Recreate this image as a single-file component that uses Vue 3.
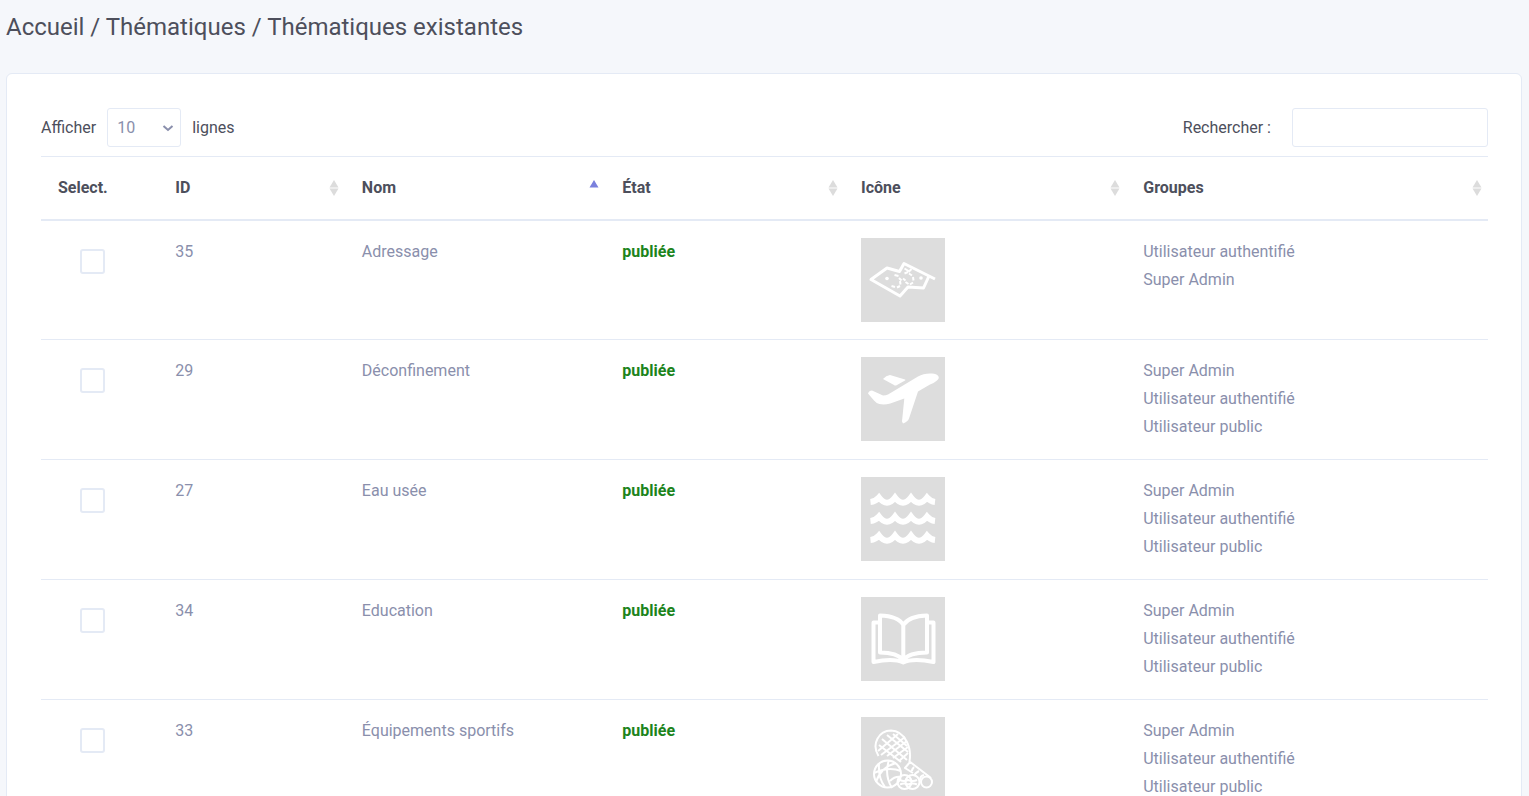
<script setup>
import { ref } from 'vue'

const length = ref('10')
const search = ref('')
const columns = [
  { label: 'Select.', sort: null },
  { label: 'ID', sort: 'both' },
  { label: 'Nom', sort: 'asc' },
  { label: 'État', sort: 'both' },
  { label: 'Icône', sort: 'both' },
  { label: 'Groupes', sort: 'both' },
]
const all = ['Super Admin', 'Utilisateur authentifié', 'Utilisateur public']
const rows = ref([
  { id: 35, name: 'Adressage', icon: 'map', groups: ['Utilisateur authentifié', 'Super Admin'], checked: false },
  { id: 29, name: 'Déconfinement', icon: 'plane', groups: all, checked: false },
  { id: 27, name: 'Eau usée', icon: 'waves', groups: all, checked: false },
  { id: 34, name: 'Education', icon: 'book', groups: all, checked: false },
  { id: 33, name: 'Équipements sportifs', icon: 'sport', groups: all, checked: false },
])
</script>

<template>
  <div class="page">
    <h1 class="title">Accueil / Thématiques / Thématiques existantes</h1>
    <main class="card">
      <div class="toolbar">
        <div class="length">
          <label for="length">Afficher</label>
          <span class="select-wrap">
            <select id="length" v-model="length">
              <option>10</option>
              <option>25</option>
              <option>50</option>
            </select>
            <svg class="chevron" viewBox="0 0 12 8" aria-hidden="true"><path d="M1.500 2 6 6l4.500-4" /></svg>
          </span>
          <span>lignes</span>
        </div>
        <div class="search">
          <label for="search">Rechercher :</label>
          <input id="search" v-model="search" type="search" />
        </div>
      </div>

      <table>
        <colgroup>
          <col class="c-select" /><col class="c-id" /><col class="c-name" />
          <col class="c-state" /><col class="c-icon" /><col class="c-groups" />
        </colgroup>
        <thead>
          <tr>
            <th v-for="c in columns" :key="c.label" scope="col">
              <div class="head">
                <span>{{ c.label }}</span>
                <button v-if="c.sort" type="button" class="sort" :class="c.sort" :aria-label="'Trier par ' + c.label">
                  <svg viewBox="0 0 10 16" aria-hidden="true">
                    <path class="up" d="M5 0 9.500 7.500h-9z" />
                    <path class="down" d="M.5 8.500h9L5 16z" />
                  </svg>
                </button>
              </div>
            </th>
          </tr>
        </thead>
        <tbody>
          <tr v-for="r in rows" :key="r.id">
            <td><input v-model="r.checked" class="check" type="checkbox" :aria-label="'Sélectionner ' + r.name" /></td>
            <td>{{ r.id }}</td>
            <td>{{ r.name }}</td>
            <td><strong>publiée</strong></td>
            <td>
              <svg class="icon" viewBox="0 0 84 84" role="img" :aria-label="r.name">
                <g v-if="r.icon === 'map'" class="line">
                  <path d="M74 41 43 25.500 38.500 33.500 26 30 10 41.500 39 58l8-9 15.500 1L68 38" />
                  <path class="thin" d="m33.500 37 4 1M38 40l2.500 2.500M30.500 48l3.500 1M36 49.500l3-1.500M39.500 46.500 39 43M42 40.500l2.500 2M44.500 44l3 2M49 46.500l3-2M52.500 42.500 52 39M51 37.500l-3-2M43.500 30.500l4 2.500M50.500 31l-3 3M43.500 35.500l3.500-1.500" />
                  <circle class="solid" cx="26" cy="40.500" r="1.800" /><circle class="solid" cx="60" cy="40" r="1.800" />
                </g>
                <path v-else-if="r.icon === 'plane'" class="solid" d="M7 36.500q1-3 4-3l11 5q3 0 5-1l30-18q6-3.500 14-3c6 0 9 4 5 7q-2 2-7 4l-12 7-9 27q-1 3-6 5l-1-2q0-1 .3-3l2-20-14 5q-6 1.500-11 .5Q15 46 13 43.500zM22 22q3-3.500 7-4l15 4.500q1 .5 0 1l-8 4.500q-2 1-3 0z" />
                <g v-else-if="r.icon === 'waves'" class="line waves">
                  <path v-for="y in [0, 19, 38]" :key="y" :transform="`translate(0 ${y})`" d="M9.500 25q5-.5 8.500-4.500 8 10.500 16 0 8 10.500 16 0 8 10.500 16 0 3.500 4 8 4.500" />
                </g>
                <g v-else-if="r.icon === 'book'" class="line book">
                  <path d="M42.300 27v39M42.300 28Q37 19 19 18.500V55.500q17 0 23.300 7.500Q48 55.500 66 55.500V18.500Q48 19 42.300 28M19 25.500h-6.500v39.500q20-4 29.800.5 9.800-4.500 30.200-.5V25.500H66" />
                </g>
                <g v-else class="line sport">
                  <path d="M17.500 39C10 27 18 13.500 30 13.500c14 .5 21 17 18.500 31L70 61M49 45l-5 6 8 5M53 50q-2 2-2 4M58 54q-4 2-5 5M63 58q-4 1-4 5" />
                  <path class="net" d="m18 28 22 17m-19-23 25 21M26 18l21 17M32 17l14 12M17 34l20-17M20 38l24-18M26 39l20-15M32 41l15-11M38 44l9-8" />
                  <circle cx="26.500" cy="57" r="13.500" />
                  <path d="M13 56q15-7 27-2M18 46q-1 15 6 24M15 65q5-15 20-19M31 71q-8-13-3-28M29 64q5-5 11-4" />
                  <circle cx="43.500" cy="65" r="7" /><circle cx="51.500" cy="65" r="7" /><circle cx="65.500" cy="65" r="5.500" />
                  <path d="M39 63q4 2 8 0 5 2 9 0M39 67.500q4-2 8 0 5-2 9 0" />
                </g>
              </svg>
            </td>
            <td>
              <div v-for="g in r.groups" :key="g">{{ g }}</div>
            </td>
          </tr>
        </tbody>
      </table>
    </main>
  </div>
</template>

<style>
body {
  margin: 0;
  background: #f5f7fb;
}
</style>

<style scoped>
.page {
  box-sizing: border-box;
  height: 100vh;
  overflow: hidden;
  padding: 10px 7px 0 6px;
  font-family: Roboto, sans-serif;
  font-size: 16px;
  line-height: 28px;
  color: #4d4f5c;
}
.title {
  margin: 0 0 29px;
  font-size: 24px;
  font-weight: 400;
  line-height: 34px;
}
.card {
  padding: 34px 33px 34px 34px;
  background: #fff;
  border: 1px solid #e4eaf5;
  border-radius: 6px;
}
.toolbar {
  display: flex;
  justify-content: space-between;
  align-items: center;
  margin-bottom: 9px;
}
.length {
  display: flex;
  align-items: center;
  gap: 11px;
}
.search {
  display: flex;
  align-items: center;
  gap: 21px;
}
.select-wrap {
  display: grid;
  align-items: center;
}
select,
.search input {
  box-sizing: border-box;
  height: 39px;
  border: 1px solid #e4eaf5;
  border-radius: 3px;
  background: #fff;
  color: #8a8fac;
  font: inherit;
}
select {
  grid-area: 1 / 1;
  width: 74px;
  padding: 0 9px;
  appearance: none;
}
.chevron {
  grid-area: 1 / 1;
  justify-self: end;
  width: 12px;
  height: 8px;
  margin-right: 7px;
  pointer-events: none;
  fill: none;
  stroke: #8a8fac;
  stroke-width: 2;
}
.search input {
  width: 196px;
  padding: 0 10px;
}
table {
  width: 100%;
  table-layout: fixed;
  border-collapse: separate;
  border-spacing: 0;
  border-top: 1px solid #e4eaf5;
}
.c-select { width: 8.1%; }
.c-id { width: 12.9%; }
.c-name { width: 18%; }
.c-state { width: 16.5%; }
.c-icon { width: 19.5%; }
.c-groups { width: 25%; }
th {
  padding: 17px 6px 17px 17px;
  border-bottom: 2px solid #e4eaf5;
  text-align: left;
  font-weight: 700;
}
.head {
  display: flex;
  align-items: center;
  justify-content: space-between;
}
.sort {
  display: block;
  width: 10px;
  height: 16px;
  padding: 0;
  border: 0;
  background: none;
}
.sort svg {
  display: block;
  width: 10px;
  height: 16px;
  fill: #dcdcdc;
}
.asc .up { fill: #7a80dd; }
.asc .down { fill: none; }
td {
  padding: 17px 17px 18px;
  vertical-align: top;
  color: #8a8fac;
}
tbody tr:first-child td {
  padding-bottom: 17px;
}
tbody tr + tr td {
  border-top: 1px solid #e4eaf5;
}
strong {
  color: #1c841c;
}
.check {
  display: block;
  box-sizing: border-box;
  width: 25px;
  height: 25px;
  margin: 11px 0 0 22px;
  border: 2px solid #e4eaf5;
  border-radius: 3px;
  background: #fff;
  appearance: none;
}
.check:checked {
  background: #7a80dd;
}
.icon {
  display: block;
  width: 84px;
  height: 84px;
  background: #ddd;
}
.solid {
  fill: #fff;
  stroke: none;
}
.line {
  fill: none;
  stroke: #fff;
  stroke-width: 3;
  stroke-linejoin: round;
}
.line .thin {
  stroke-width: 2;
}
.waves {
  stroke-width: 6;
  stroke-linejoin: miter;
}
.book {
  stroke-width: 4;
}
.sport {
  stroke-width: 2;
}
</style>
